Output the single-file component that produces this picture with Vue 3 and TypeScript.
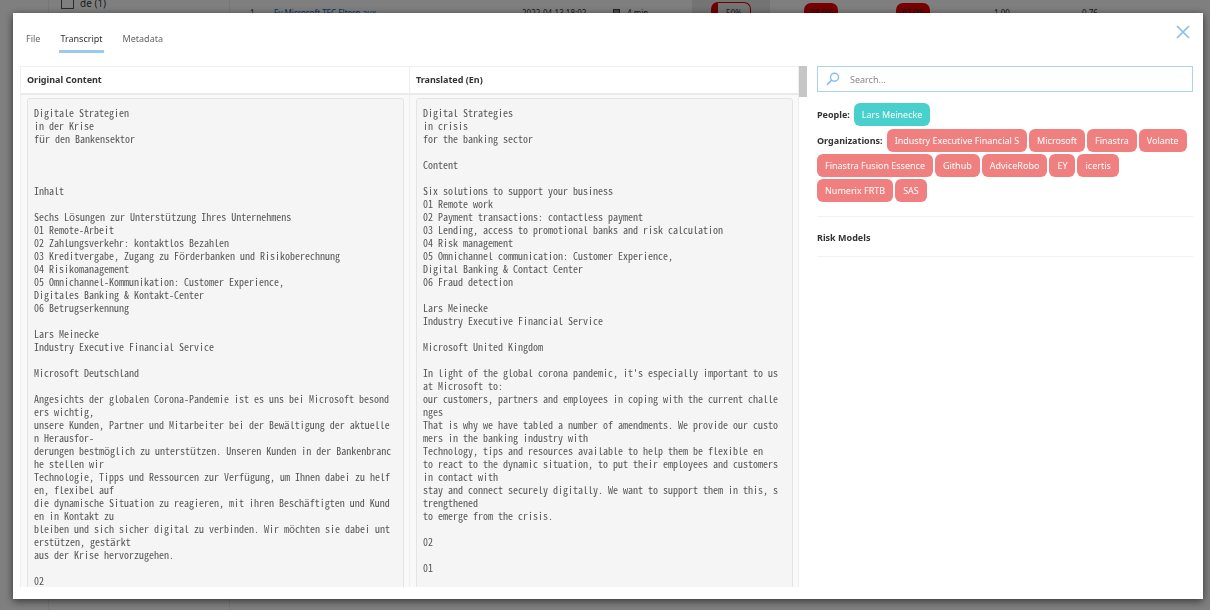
<script setup lang="ts">
import { ref } from 'vue'

const tabs: string[] = ['File', 'Transcript', 'Metadata']
const activeTab = ref<string>('Transcript')
const query = ref<string>('')

const people: string[] = ['Lars Meinecke']
const organizations: string[] = [
  'Industry Executive Financial S',
  'Microsoft',
  'Finastra',
  'Volante',
  'Finastra Fusion Essence',
  'Github',
  'AdviceRobo',
  'EY',
  'icertis',
  'Numerix FRTB',
  'SAS',
]

const original: string = [
  'Digitale Strategien',
  'in der Krise',
  'für den Bankensektor',
  '',
  '',
  '',
  'Inhalt',
  '',
  'Sechs Lösungen zur Unterstützung Ihres Unternehmens',
  '01 Remote-Arbeit',
  '02 Zahlungsverkehr: kontaktlos Bezahlen',
  '03 Kreditvergabe, Zugang zu Förderbanken und Risikoberechnung',
  '04 Risikomanagement',
  '05 Omnichannel-Kommunikation: Customer Experience,',
  'Digitales Banking & Kontakt-Center',
  '06 Betrugserkennung',
  '',
  'Lars Meinecke',
  'Industry Executive Financial Service',
  '',
  'Microsoft Deutschland',
  '',
  'Angesichts der globalen Corona-Pandemie ist es uns bei Microsoft besond',
  'ers wichtig,',
  'unsere Kunden, Partner und Mitarbeiter bei der Bewältigung der aktuelle',
  'n Herausfor-',
  'derungen bestmöglich zu unterstützen. Unseren Kunden in der Bankenbranc',
  'he stellen wir',
  'Technologie, Tipps und Ressourcen zur Verfügung, um Ihnen dabei zu helf',
  'en, flexibel auf',
  'die dynamische Situation zu reagieren, mit ihren Beschäftigten und Kund',
  'en in Kontakt zu',
  'bleiben und sich sicher digital zu verbinden. Wir möchten sie dabei unt',
  'erstützen, gestärkt',
  'aus der Krise hervorzugehen.',
  '',
  '02',
].join('\n')

const translated: string = [
  'Digital Strategies',
  'in crisis',
  'for the banking sector',
  '',
  'Content',
  '',
  'Six solutions to support your business',
  '01 Remote work',
  '02 Payment transactions: contactless payment',
  '03 Lending, access to promotional banks and risk calculation',
  '04 Risk management',
  '05 Omnichannel communication: Customer Experience,',
  'Digital Banking & Contact Center',
  '06 Fraud detection',
  '',
  'Lars Meinecke',
  'Industry Executive Financial Service',
  '',
  'Microsoft United Kingdom',
  '',
  "In light of the global corona pandemic, it's especially important to us",
  'at Microsoft to:',
  'our customers, partners and employees in coping with the current challe',
  'nges',
  'That is why we have tabled a number of amendments. We provide our custo',
  'mers in the banking industry with',
  'Technology, tips and resources available to help them be flexible en',
  'to react to the dynamic situation, to put their employees and customers',
  'in contact with',
  'stay and connect securely digitally. We want to support them in this, s',
  'trengthened',
  'to emerge from the crisis.',
  '',
  '02',
  '',
  '01',
].join('\n')
</script>

<template>
  <div class="screen">
    <div class="page">
      <aside class="facets">
        <label class="facet"><input type="checkbox" />de (1)</label>
      </aside>
      <div class="result">
        <span>1</span>
        <a href="#">Ey Microsoft TEC Eltern.aux</a>
        <span>2022-04-13 18:02</span>
        <span class="duration">
          <svg width="9" height="9" viewBox="0 0 9 9"><rect x="1" y="0" width="7" height="9" fill="#444" /><path d="M2 2h5M2 4h5M2 6h5" stroke="#ddd" /></svg>
          4 min
        </span>
        <span class="score-cell"><span class="score">50%</span></span>
        <span><b class="pill">98.0%</b></span>
        <span><b class="pill">97.0%</b></span>
        <span class="number">1.00</span>
        <span class="number">0.76</span>
      </div>
    </div>

    <div class="overlay">
      <section class="modal" role="dialog" aria-label="Document">
        <header class="top">
          <nav class="tabs">
            <button
              v-for="tab in tabs"
              :key="tab"
              type="button"
              class="tab"
              :class="{ active: tab === activeTab }"
              @click="activeTab = tab"
            >{{ tab }}</button>
          </nav>
          <button type="button" class="close" aria-label="Close">
            <svg width="14" height="14" viewBox="0 0 14 14"><path d="M1 1l12 12M13 1L1 13" fill="none" stroke="#83bcf0" stroke-width="1.6" /></svg>
          </button>
        </header>

        <div class="body">
          <div class="scroller">
            <div class="view">
              <table>
                <thead>
                  <tr><th>Original Content</th><th>Translated (En)</th></tr>
                </thead>
                <tbody>
                  <tr>
                    <td><pre>{{ original }}</pre></td>
                    <td><pre>{{ translated }}</pre></td>
                  </tr>
                </tbody>
              </table>
            </div>
            <div class="track"><div class="thumb"></div></div>
          </div>

          <aside class="side">
            <label class="search">
              <svg width="14" height="14" viewBox="0 0 14 14" aria-hidden="true"><circle cx="8.5" cy="5.2" r="4" fill="none" stroke="#83bcf0" stroke-width="1.4" /><path d="M5.6 8.1L1 12.8" stroke="#83bcf0" stroke-width="1.6" /></svg>
              <input v-model="query" type="text" placeholder="Search..." aria-label="Search" />
            </label>
            <div class="tags">
              <strong>People:</strong>
              <span v-for="p in people" :key="p" class="tag person">{{ p }}</span>
            </div>
            <div class="tags">
              <strong>Organizations:</strong>
              <span v-for="o in organizations" :key="o" class="tag">{{ o }}</span>
            </div>
            <h2>Risk Models</h2>
          </aside>
        </div>
      </section>
    </div>
  </div>
</template>

<style>
body {
  margin: 0;
}
</style>

<style scoped>
.screen {
  height: 100vh;
  overflow: hidden;
  background: #fff;
  font: 10px/13px "Noto Sans", "Open Sans", sans-serif;
  color: #333;
}
.screen * {
  box-sizing: border-box;
}
.page {
  display: flex;
  height: 100%;
}
.facets {
  width: 182px;
  margin-left: 48px;
  padding-left: 12px;
  border: solid #eee;
  border-width: 0 1px;
}
.facet {
  display: flex;
  gap: 6px;
  height: 9px;
  align-items: flex-end;
  line-height: 12px;
}
.facet input {
  appearance: none;
  width: 13px;
  height: 13px;
  margin: 0;
  border: 1px solid #555;
}
.result {
  flex: 1;
  display: grid;
  grid-template-columns: 24px 248px 90px 80px 78px 102px 82px 96px 80px;
  align-items: start;
  padding-left: 20px;
  font-size: 8px;
  line-height: 26px;
}
.result a {
  color: #1565c0;
  text-decoration: none;
}
.number {
  text-align: center;
}
.duration {
  display: flex;
  align-items: center;
  gap: 6px;
}
.score-cell {
  display: flex;
  justify-content: center;
  height: 30px;
  padding-top: 2px;
  background: #e8e8e8;
}
.score {
  width: 40px;
  height: 22px;
  border: 1px solid #d00;
  border-left-width: 7px;
  border-radius: 7px;
  text-align: center;
  line-height: 20px;
}
.pill {
  display: block;
  width: 34px;
  height: 22px;
  margin: 3px auto 0;
  border-radius: 7px;
  background: #f00000;
  text-align: center;
  font-weight: 400;
  line-height: 20px;
}
.overlay {
  position: fixed;
  inset: 0;
  display: flex;
  padding: 13px 7px 11px 13px;
  background: rgba(0, 0, 0, 0.5);
}
.modal {
  flex: 1;
  min-width: 0;
  display: flex;
  flex-direction: column;
  padding: 12px 10px 12px 7px;
  background: #fff;
  box-shadow: 0 2px 8px rgba(0, 0, 0, 0.6);
}
.top {
  display: flex;
  justify-content: space-between;
  align-items: flex-start;
  height: 41px;
}
.tabs {
  display: flex;
  gap: 18px;
  padding-left: 5px;
}
button {
  border: 0;
  background: none;
  padding: 0;
  font: inherit;
  color: #666;
}
.tab {
  height: 28px;
  padding: 1px 1px 0;
  border-bottom: 3px solid transparent;
  font-size: 9px;
}
.tab.active {
  border-color: #9cc9f2;
  color: #333;
}
.close {
  width: 14px;
  height: 14px;
  margin-right: 3px;
}
.close svg {
  display: block;
}
.body {
  flex: 1;
  min-height: 0;
  display: flex;
  gap: 10px;
}
.scroller {
  flex: 787;
  min-width: 0;
  display: flex;
}
.view {
  flex: 1;
  min-width: 0;
  overflow: hidden;
}
table {
  width: 100%;
  table-layout: fixed;
  border-collapse: collapse;
}
th,
td {
  border: 1px solid #eee;
}
th {
  height: 27px;
  padding: 0 6px;
  border-bottom: 2px solid #eaeaea;
  text-align: left;
  font-size: 9px;
  color: #333;
}
td {
  padding: 3px 5px 4px 6px;
  background: #f9f9f9;
  vertical-align: top;
}
pre {
  min-height: 500px;
  margin: 0;
  padding: 7px 6px;
  border: 1px solid #e4e4e4;
  border-radius: 3px;
  background: #f5f5f5;
  color: #555;
  font: 10px/13px "Noto Sans Mono CJK SC", "Liberation Mono", monospace;
}
.track {
  width: 8px;
}
.thumb {
  height: 31px;
  background: #c6c6c6;
}
.side {
  flex: 376;
  min-width: 0;
}
.search {
  display: flex;
  align-items: center;
  gap: 10px;
  height: 26px;
  margin-bottom: 11px;
  padding: 0 8px;
  border: 1px solid #a8d2f6;
}
.search input {
  flex: 1;
  min-width: 0;
  border: 0;
  outline: 0;
  padding: 0;
  background: none;
  font: inherit;
  font-size: 9px;
  color: #333;
}
.search input::placeholder {
  color: #888;
}
.tags {
  display: flex;
  flex-wrap: wrap;
  align-items: center;
  gap: 2px;
  margin-bottom: 3px;
  font-size: 9px;
}
.tags strong {
  margin-right: 2px;
}
.tag {
  padding: 5px 8px;
  border-radius: 6px;
  background: #f08080;
  color: #fff;
}
.tag.person {
  background: #48d1cc;
}
h2 {
  margin: 14px 0 0;
  padding: 14px 0 12px;
  border: solid #f2f2f2;
  border-width: 1px 0;
  font-size: 9px;
  line-height: 13px;
}
</style>
